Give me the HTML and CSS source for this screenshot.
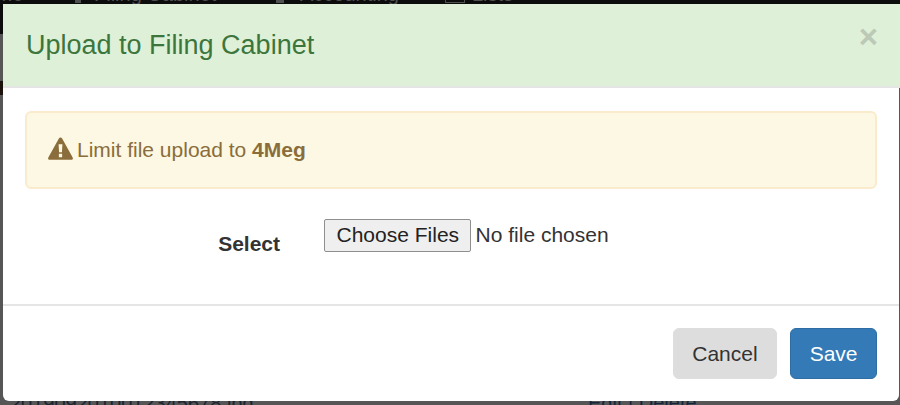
FILE: index.html
```html
<!DOCTYPE html>
<html lang="en">
<head>
    <meta charset="UTF-8">
    <title>Upload to Filing Cabinet</title>
    <link rel="stylesheet" href="styles.css">
</head>
<body>
    <div class="page-behind">
        <div class="nav-bar">
            <span class="nav-item nav-home">Home</span>
            <span class="nav-icon icon-first"></span>
            <span class="nav-item nav-first">Filing Cabinet</span>
            <span class="nav-icon icon-second"></span>
            <span class="nav-item nav-second">Accounting</span>
            <span class="nav-icon icon-third"></span>
            <span class="nav-item nav-third">Lists</span>
        </div>
        <div class="side-mark"></div>
        <div class="file-row">
            <span class="file-name">2019092010012345678.jpg</span>
            <span class="file-links">Edit | Delete</span>
        </div>
    </div>

    <div class="modal">
        <div class="modal-header">
            <h4 class="modal-title">Upload to Filing Cabinet</h4>
            <span class="close">&times;</span>
        </div>
        <div class="modal-body">
            <div class="alert">
                <svg class="warn-icon" viewBox="0 0 26 24" width="25" height="23">
                    <path fill="#8a6d3b" fill-rule="evenodd" d="M13 0.5c.7 0 1.3.4 1.7 1l11 20c.6 1.1-.1 2.300-1.400 2.300H1.700C.4 23.800-.3 22.600.3 21.500l11-20c.4-.6 1-1 1.700-1zM11 7.500l.5 8.500h3l.5-8.500zM11.300 17.500v3.500h3.400v-3.500z"/>
                </svg>
                <span>Limit file upload to <b>4Meg</b></span>
            </div>
            <div class="form-row">
                <label class="form-label">Select</label>
                <div class="file-input">
                    <span class="file-btn">Choose Files</span>
                    <span class="file-status">No file chosen</span>
                </div>
            </div>
        </div>
        <div class="modal-footer">
            <button class="btn btn-cancel">Cancel</button>
            <button class="btn btn-save">Save</button>
        </div>
    </div>
</body>
</html>
```
FILE: styles.css
```css
html, body {
    height: 100%;
}
body {
    margin: 0;
    padding: 4px 1px 4px 3px;
    box-sizing: border-box;
    height: 405px;
    overflow: hidden;
    background-color: #565656;
    font-family: "Liberation Sans", Arial, sans-serif;
    color: #333;
}

/* page under the dialog, only the edges show */
.page-behind {
    position: absolute;
    top: 0;
    left: 0;
    width: 900px;
    height: 405px;
    overflow: hidden;
}
.nav-bar {
    position: relative;
    height: 34px;
    background-color: #0c0c0c;
}
.nav-item {
    position: absolute;
    top: -16px;
    font-size: 20px;
    line-height: 20px;
    color: #505050;
}
.nav-home { left: -30px; }
.nav-first { left: 94px; }
.nav-second { left: 300px; }
.nav-third { left: 472px; }
.nav-icon {
    position: absolute;
    top: 0;
    height: 3px;
    background-color: #505050;
}
.icon-first { left: 75px; width: 6px; }
.icon-second { left: 276px; width: 8px; }
.icon-third {
    left: 445px;
    width: 18px;
    height: 2px;
    background-color: transparent;
    border: 1px solid #505050;
    border-top: none;
}
.side-mark {
    position: absolute;
    top: 81px;
    left: 0;
    width: 3px;
    height: 14px;
    background-color: #1c140c;
}
.file-row {
    position: absolute;
    top: 393px;
    left: 0;
    width: 900px;
    font-size: 20px;
    line-height: 20px;
    color: #1c2430;
}
.file-name {
    position: absolute;
    left: 10px;
}
.file-links {
    position: absolute;
    left: 588px;
    color: #14263c;
}

.modal {
    position: relative;
    display: flex;
    flex-direction: column;
    height: 397px;
    background-color: #fff;
    border-radius: 0 0 6px 6px;
}
.modal-header {
    position: relative;
    height: 82px;
    margin-right: -1px;
    padding: 0 23px;
    display: flex;
    align-items: center;
    background-color: #dff0d8;
    border-bottom: 2px solid #e5e5e5;
}
.modal-title {
    margin: 0;
    font-size: 27px;
    font-weight: normal;
    color: #3c763d;
}
.close {
    position: absolute;
    top: 18px;
    right: 22px;
    font-size: 33px;
    line-height: 30px;
    font-weight: bold;
    color: #bcc9b6;
}
.modal-body {
    flex: 1;
    padding: 23px 22px 0;
}
.alert {
    display: flex;
    align-items: center;
    gap: 4px;
    height: 74px;
    padding: 0 21px;
    background-color: #fcf8e3;
    border: 2px solid #faebcc;
    border-radius: 6px;
    font-size: 21px;
    color: #8a6d3b;
}
.warn-icon {
    margin-bottom: 4px;
}
.form-row {
    display: flex;
    margin-top: 30px;
}
.form-label {
    width: 255px;
    padding-top: 13px;
    text-align: right;
    font-size: 21px;
    font-weight: bold;
}
.file-input {
    margin-left: 44px;
    display: flex;
    align-items: center;
    height: 33px;
    gap: 5px;
    font-size: 21px;
    line-height: 31px;
}
.file-btn {
    height: 33px;
    line-height: 29px;
    padding: 0 10.5px 2px 11.5px;
    box-sizing: border-box;
    background-color: #efefef;
    border: 1px solid #8f8f8f;
    border-radius: 2px;
    color: #222;
}
.file-status {
    margin-bottom: 2px;
}
.modal-footer {
    height: 97px;
    display: flex;
    justify-content: flex-end;
    align-items: flex-start;
    gap: 13px;
    padding: 22px 22px 0;
    box-sizing: border-box;
    border-top: 2px solid #e5e5e5;
}
.btn {
    height: 51px;
    padding: 0 18.5px;
    font-family: inherit;
    font-size: 21px;
    border: 1px solid transparent;
    border-radius: 6px;
    cursor: pointer;
}
.btn-cancel {
    background-color: #ddd;
    border-color: #ddd;
    color: #333;
}
.btn-save {
    background-color: #337ab7;
    border-color: #2e6da4;
    color: #fff;
}
```
